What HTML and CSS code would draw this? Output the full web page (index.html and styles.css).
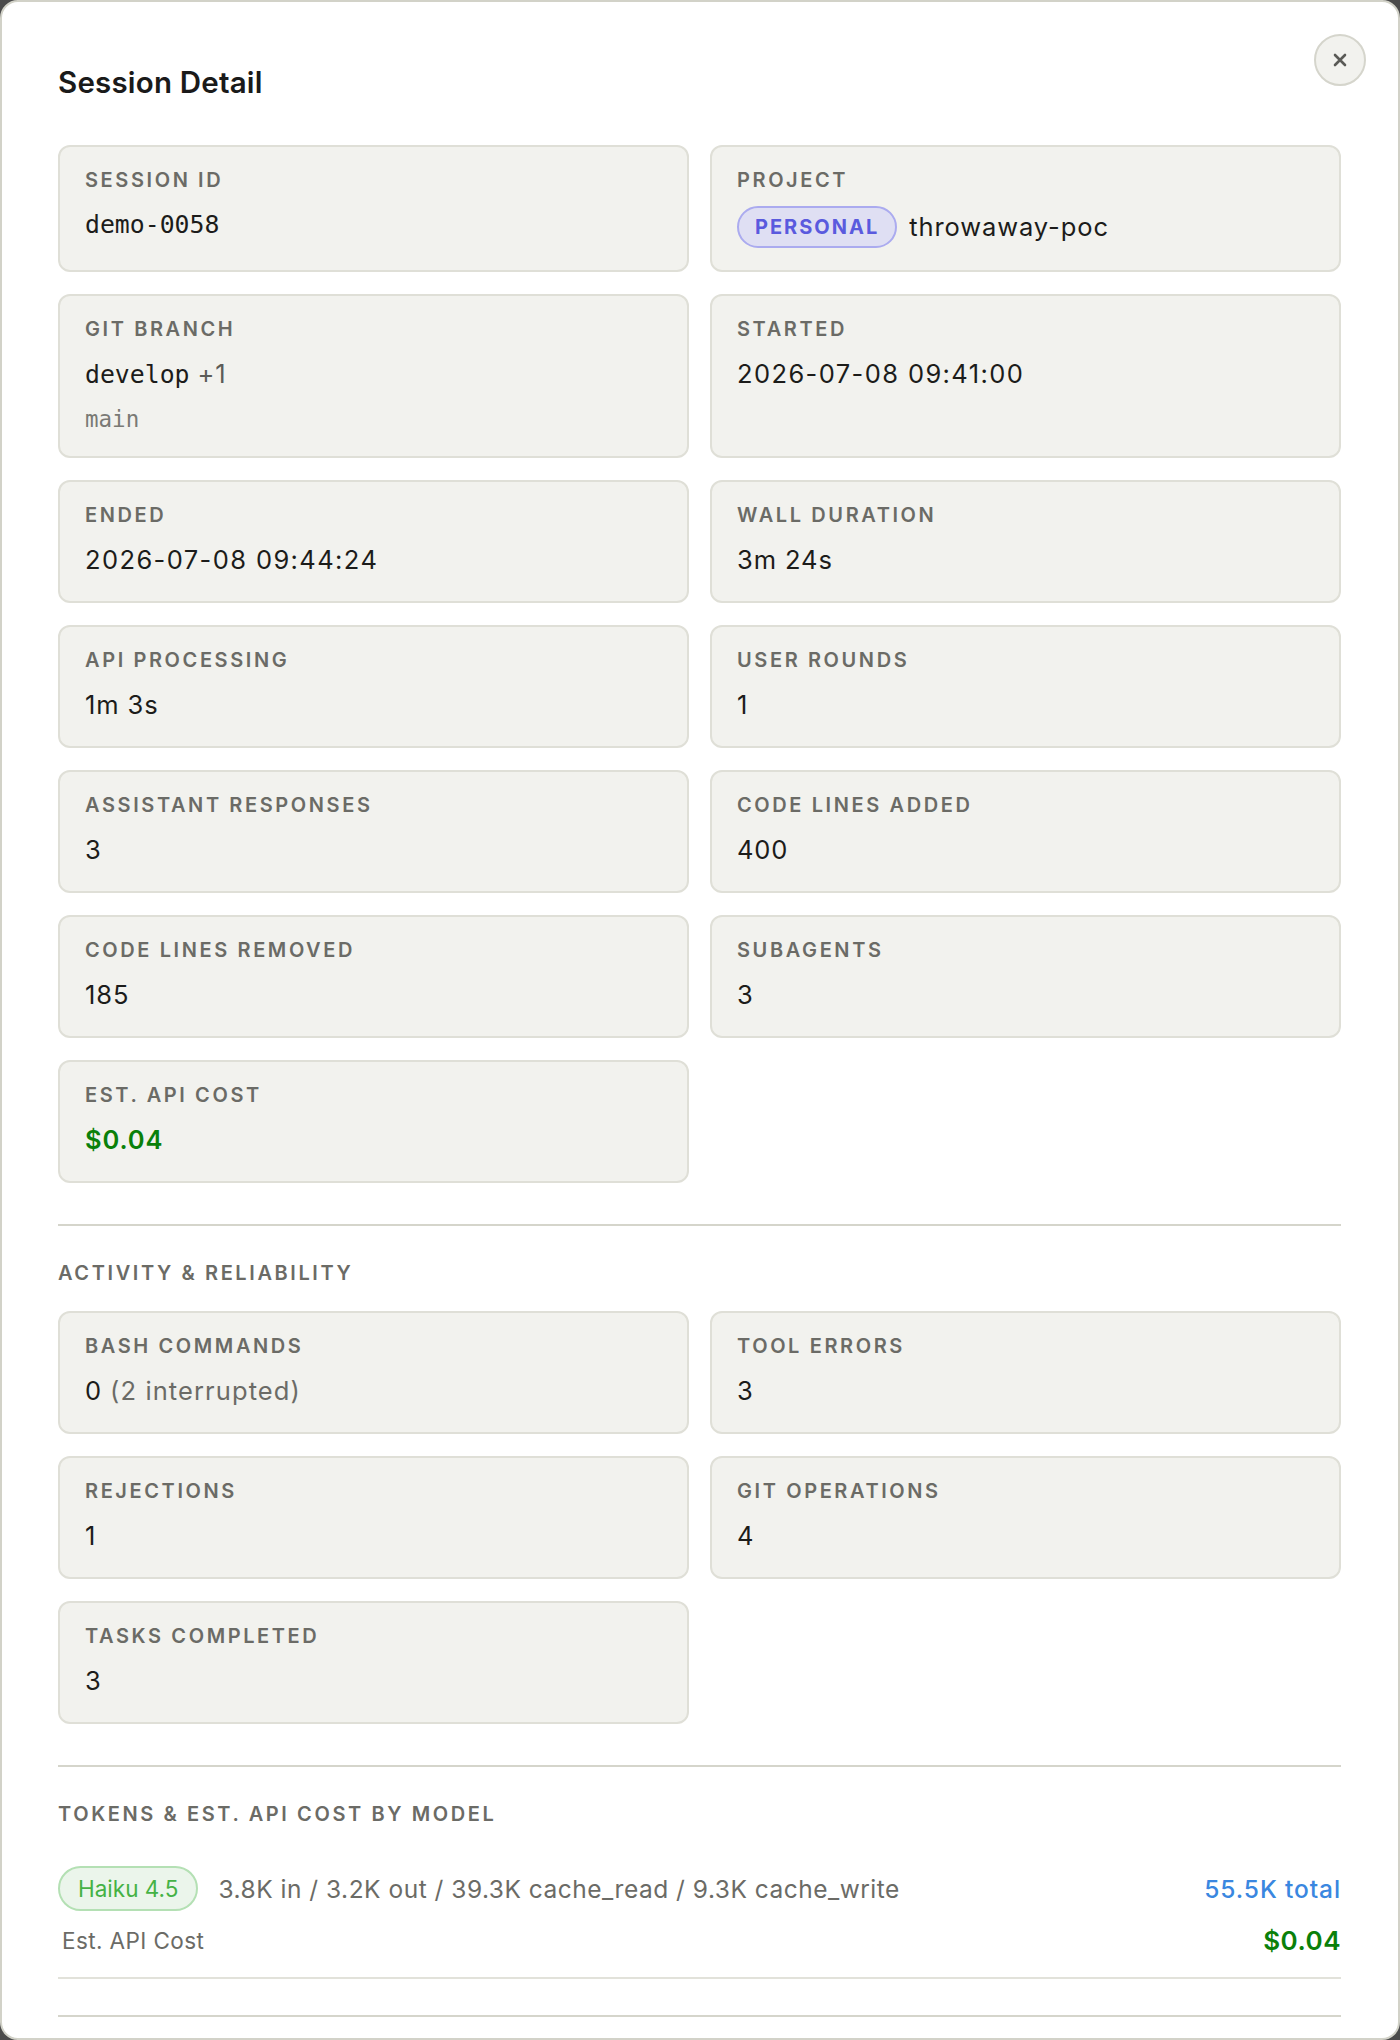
FILE: index.html
```html
<!DOCTYPE html>
<html lang="en">
<head>
    <meta charset="UTF-8">
    <meta name="viewport" content="width=device-width, initial-scale=1.0">
    <title>Session Detail</title>
    <link rel="stylesheet" href="styles.css">
</head>
<body>

<div class="modal">
    <button class="close-btn" aria-label="Close">
        <svg width="14" height="14" viewBox="0 0 14 14"><path d="M2 2 L12 12 M12 2 L2 12" stroke="#5a5a56" stroke-width="2.6" stroke-linecap="round"/></svg>
    </button>

    <h2 class="title">Session Detail</h2>

    <div class="grid">
        <div class="card">
            <div class="label">Session ID</div>
            <div class="value mono">demo-0058</div>
        </div>
        <div class="card">
            <div class="label">Project</div>
            <div class="value value-row">
                <span class="tag tag-personal">PERSONAL</span>
                <span>throwaway-poc</span>
            </div>
        </div>
        <div class="card">
            <div class="label">Git Branch</div>
            <div class="value"><span class="mono">develop</span> <span class="extra">+1</span></div>
            <div class="sub mono">main</div>
        </div>
        <div class="card">
            <div class="label">Started</div>
            <div class="value date">2026-07-08 09:41:00</div>
        </div>
        <div class="card">
            <div class="label">Ended</div>
            <div class="value date">2026-07-08 09:44:24</div>
        </div>
        <div class="card">
            <div class="label">Wall Duration</div>
            <div class="value">3m 24s</div>
        </div>
        <div class="card">
            <div class="label">API Processing</div>
            <div class="value">1m 3s</div>
        </div>
        <div class="card">
            <div class="label">User Rounds</div>
            <div class="value">1</div>
        </div>
        <div class="card">
            <div class="label">Assistant Responses</div>
            <div class="value">3</div>
        </div>
        <div class="card">
            <div class="label">Code Lines Added</div>
            <div class="value">400</div>
        </div>
        <div class="card">
            <div class="label">Code Lines Removed</div>
            <div class="value">185</div>
        </div>
        <div class="card">
            <div class="label">Subagents</div>
            <div class="value">3</div>
        </div>
        <div class="card">
            <div class="label">Est. API Cost</div>
            <div class="value cost">$0.04</div>
        </div>
    </div>

    <div class="section">
        <h3 class="section-title">Activity &amp; Reliability</h3>
        <div class="grid">
            <div class="card">
                <div class="label">Bash Commands</div>
                <div class="value">0 <span class="muted">(2 interrupted)</span></div>
            </div>
            <div class="card">
                <div class="label">Tool Errors</div>
                <div class="value">3</div>
            </div>
            <div class="card">
                <div class="label">Rejections</div>
                <div class="value">1</div>
            </div>
            <div class="card">
                <div class="label">Git Operations</div>
                <div class="value">4</div>
            </div>
            <div class="card">
                <div class="label">Tasks Completed</div>
                <div class="value">3</div>
            </div>
        </div>
    </div>

    <div class="section">
        <h3 class="section-title">Tokens &amp; Est. API Cost by Model</h3>
        <div class="model-block">
            <div class="model-row">
                <span class="tag tag-model">Haiku 4.5</span>
                <span class="tokens">3.8K in / 3.2K out / 39.3K cache_read / 9.3K cache_write</span>
                <span class="total">55.5K total</span>
            </div>
            <div class="cost-row">
                <span class="cost-label">Est. API Cost</span>
                <span class="cost">$0.04</span>
            </div>
        </div>
    </div>

    <div class="section section-end"></div>
</div>

</body>
</html>
```

FILE: styles.css
```css
body {
    margin: 0;
    background-color: #4b4b4b;
    font-family: 'Inter', 'Noto Sans', sans-serif;
    color: #1c1c1a;
}
.modal {
    position: relative;
    box-sizing: border-box;
    height: 100vh;
    overflow: hidden;
    background: #fff;
    border: 2px solid #d2d2c8;
    border-radius: 18px;
    padding: 63px 57px 0 56px;
}
.close-btn {
    position: absolute;
    top: 32px;
    right: 32px;
    width: 52px;
    height: 52px;
    border-radius: 50%;
    border: 2px solid #d5d5cc;
    background: #f2f2ee;
    display: flex;
    align-items: center;
    justify-content: center;
    padding: 0;
    cursor: pointer;
}
.title {
    margin: 0 0 46px;
    font-size: 29.5px;
    font-weight: 600;
    line-height: 34px;
    letter-spacing: 0.2px;
    color: #1a1a1a;
}
.grid {
    display: grid;
    grid-template-columns: 1fr 1fr;
    gap: 22px 21px;
}
.card {
    background: #f2f2ee;
    border: 2px solid #dfdfd7;
    border-radius: 12px;
    padding: 22px 25px 22px;
}
.label, .section-title {
    font-size: 20px;
    line-height: 22px;
    font-weight: 600;
    letter-spacing: 0.13em;
    text-transform: uppercase;
    color: #6b6b66;
}
.label {
    margin-bottom: 15px;
}
.value {
    font-size: 25.5px;
    line-height: 38px;
    letter-spacing: 0.9px;
    color: #1c1c1a;
}
.date {
    letter-spacing: 1.4px;
}
.value-row {
    display: flex;
    align-items: center;
    gap: 12px;
}
.mono {
    font-family: 'DejaVu Sans Mono', 'Liberation Mono', monospace;
    font-size: 24.8px;
    letter-spacing: 0;
}
.extra {
    color: #5c5c58;
}
.sub {
    margin-top: 10px;
    font-size: 22.5px;
    line-height: 30px;
    color: #7a7a75;
}
.muted {
    color: #6b6b66;
    letter-spacing: 1.1px;
}
.cost {
    color: #0a800a;
    font-weight: 600;
}
.tag {
    display: inline-flex;
    align-items: center;
    height: 42px;
    box-sizing: border-box;
    border-radius: 999px;
    padding: 0 16px;
}
.tag-personal {
    background: #dfdff3;
    border: 2px solid #ababef;
    color: #5a5ade;
    font-size: 20px;
    font-weight: 700;
    letter-spacing: 0.1em;
}
.section {
    margin-top: 41px;
    border-top: 2px solid #d5d5cb;
}
.section-title {
    margin: 36px 0 27px;
}
.model-block {
    padding: 14px 0 21px;
    border-bottom: 2px solid #e2e2da;
}
.model-row {
    display: flex;
    align-items: center;
}
.tag-model {
    height: 45px;
    padding: 0 18px;
    background: #ebf5eb;
    border: 2px solid #b4e0b4;
    color: #45b245;
    font-size: 22.5px;
}
.tokens {
    margin-left: 20px;
    font-size: 24.5px;
    letter-spacing: 0.5px;
    color: #6b6b66;
}
.total {
    margin-left: auto;
    font-size: 24.5px;
    font-weight: 500;
    letter-spacing: 0.9px;
    color: #3a87e0;
}
.cost-row {
    display: flex;
    justify-content: space-between;
    align-items: center;
    margin-top: 15px;
    line-height: 30px;
}
.cost-label {
    padding-left: 4px;
    font-size: 22.5px;
    letter-spacing: 0.4px;
    color: #6b6b66;
}
.cost-row .cost {
    font-size: 26px;
    letter-spacing: 0.5px;
}
.section-end {
    margin-top: 36px;
}
```
